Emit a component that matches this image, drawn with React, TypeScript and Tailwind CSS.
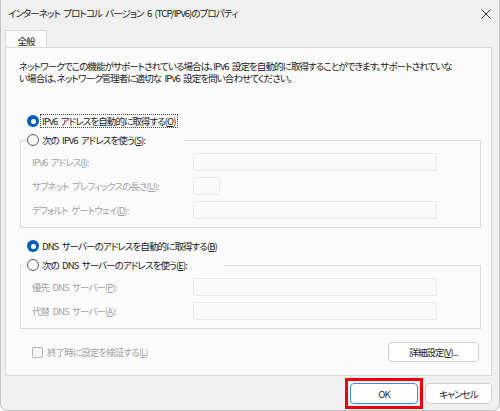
import type { ReactNode } from 'react';

const font =
  "font-['Noto_Sans_CJK_JP','Noto_Sans',sans-serif] [font-feature-settings:'palt'] tracking-[-0.9px] [word-spacing:2px]";

function Radio({ checked }: { checked?: boolean }) {
  if (checked) {
    return (
      <span className="flex h-[12px] w-[12px] shrink-0 items-center justify-center rounded-full bg-[#005fb8]">
        <span className="h-[5px] w-[5px] rounded-full bg-white" />
      </span>
    );
  }
  return <span className="h-[12px] w-[12px] shrink-0 rounded-full border border-[#5c5c5c] bg-[#f7f7f7]" />;
}

function Field({ label, short }: { label: ReactNode; short?: boolean }) {
  return (
    <div className="flex h-[18px] items-center">
      <span className="w-[166px] whitespace-nowrap pl-[5px] text-[#a3a3a3]">{label}</span>
      <span
        className={`h-[18px] rounded-[2px] border border-[#ebebeb] bg-[#fafafa] ${short ? 'w-[27px]' : 'w-[244px]'}`}
      />
    </div>
  );
}

function Group({ legend, legendWidth, children }: { legend: ReactNode; legendWidth: string; children: ReactNode }) {
  return (
    <fieldset className="ml-[14px] w-[461px] border border-[#dcdcdc] pb-[8px] pl-[6px]">
      <legend className={`flex h-[14px] items-center gap-[3px] whitespace-nowrap text-[#1a1a1a] ${legendWidth}`}>
        <Radio />
        <span>{legend}</span>
      </legend>
      <div className="flex flex-col gap-[6px] pt-[6px]">{children}</div>
    </fieldset>
  );
}

export default function App() {
  return (
    <div
      className={`${font} flex h-[411px] w-[500px] flex-col overflow-hidden rounded-b-[7px] border-x border-b border-[#c4c4c4] bg-[#f0f0f0] text-[9.5px] leading-[12px] text-[#1a1a1a]`}
    >
      {/* title bar */}
      <div className="flex h-[30px] shrink-0 items-center justify-between pb-[4px] pl-[7px] pr-[7px]">
        <span className="whitespace-nowrap">インターネット プロトコル バージョン 6 (TCP/IPv6)のプロパティ</span>
        <svg width="10" height="10" viewBox="0 0 10 10" className="mr-[1px] mt-[2px]">
          <path d="M0.5 0.5 9.5 9.5M9.5 0.5 0.5 9.5" stroke="#333" strokeWidth="1" />
        </svg>
      </div>

      {/* tab */}
      <div className="flex px-[4px]">
        <div className="flex h-[18px] w-[42px] items-center justify-center border-x border-t border-[#d9d9d9] bg-[#fbfbfb] pt-[2px]">
          全般
        </div>
      </div>

      {/* page */}
      <div className="mx-[4px] -mt-px flex h-[329px] w-[487px] flex-col border border-[#d9d9d9] bg-[#fbfbfb]">
        <div className="ml-[13px] mt-[12px] flex flex-col whitespace-nowrap">
          <span className="h-[12px]">
            ネットワークでこの機能がサポートされている場合は、IPv6 設定を自動的に取得することができます。サポートされていな
          </span>
          <span className="h-[12px]">い場合は、ネットワーク管理者に適切な IPv6 設定を問い合わせてください。</span>
        </div>

        <div className="ml-[21px] mt-[30px] flex h-[14px] items-center gap-[1px]">
          <Radio checked />
          <span className="flex h-[14px] items-center whitespace-nowrap border border-dotted border-[#444] px-[1px]">
            IPv6 アドレスを自動的に取得する(<u>O</u>)
          </span>
        </div>

        <div className="mt-[5px]">
          <Group legend={<>次の IPv6 アドレスを使う(<u>S</u>):</>} legendWidth="w-[157px]">
            <Field label={<>IPv6 アドレス(<u>I</u>):</>} />
            <Field label={<>サブネット プレフィックスの長さ(<u>U</u>):</>} short />
            <Field label={<>デフォルト ゲートウェイ(<u>D</u>):</>} />
          </Group>
        </div>

        <div className="ml-[21px] mt-[11px] flex h-[14px] items-center gap-[3px]">
          <Radio checked />
          <span className="whitespace-nowrap">
            DNS サーバーのアドレスを自動的に取得する(<u>B</u>)
          </span>
        </div>

        <div className="mt-[5px]">
          <Group legend={<>次の DNS サーバーのアドレスを使う(<u>E</u>):</>} legendWidth="w-[197px]">
            <Field label={<>優先 DNS サーバー(<u>P</u>):</>} />
            <Field label={<>代替 DNS サーバー(<u>A</u>):</>} />
          </Group>
        </div>

        <div className="mt-[13px] flex h-[20px] items-center">
          <span className="ml-[26px] h-[11px] w-[11px] rounded-[2px] border border-[#b4b4b4] bg-[#f7f7f7]" />
          <span className="ml-[4px] whitespace-nowrap text-[#a3a3a3]">
            終了時に設定を検証する(<u>L</u>)
          </span>
          <button className="ml-auto mr-[12px] flex h-[20px] w-[91px] items-center justify-center rounded-[4px] border border-[#d0d0d0] bg-white">
            詳細設定(<u>V</u>)...
          </button>
        </div>
      </div>

      {/* footer */}
      <div className="mt-[2px] flex justify-end gap-[2px] pr-[7px]">
        <div className="border-[3px] border-[#e8000b] p-[2px]">
          <button className="flex h-[21px] w-[68px] items-center justify-center rounded-[4px] border border-[#3f8fd8] bg-white">
            OK
          </button>
        </div>
        <button className="mt-[5px] flex h-[21px] w-[67px] items-center justify-center rounded-[4px] border border-[#d0d0d0] bg-white">
          キャンセル
        </button>
      </div>
    </div>
  );
}
